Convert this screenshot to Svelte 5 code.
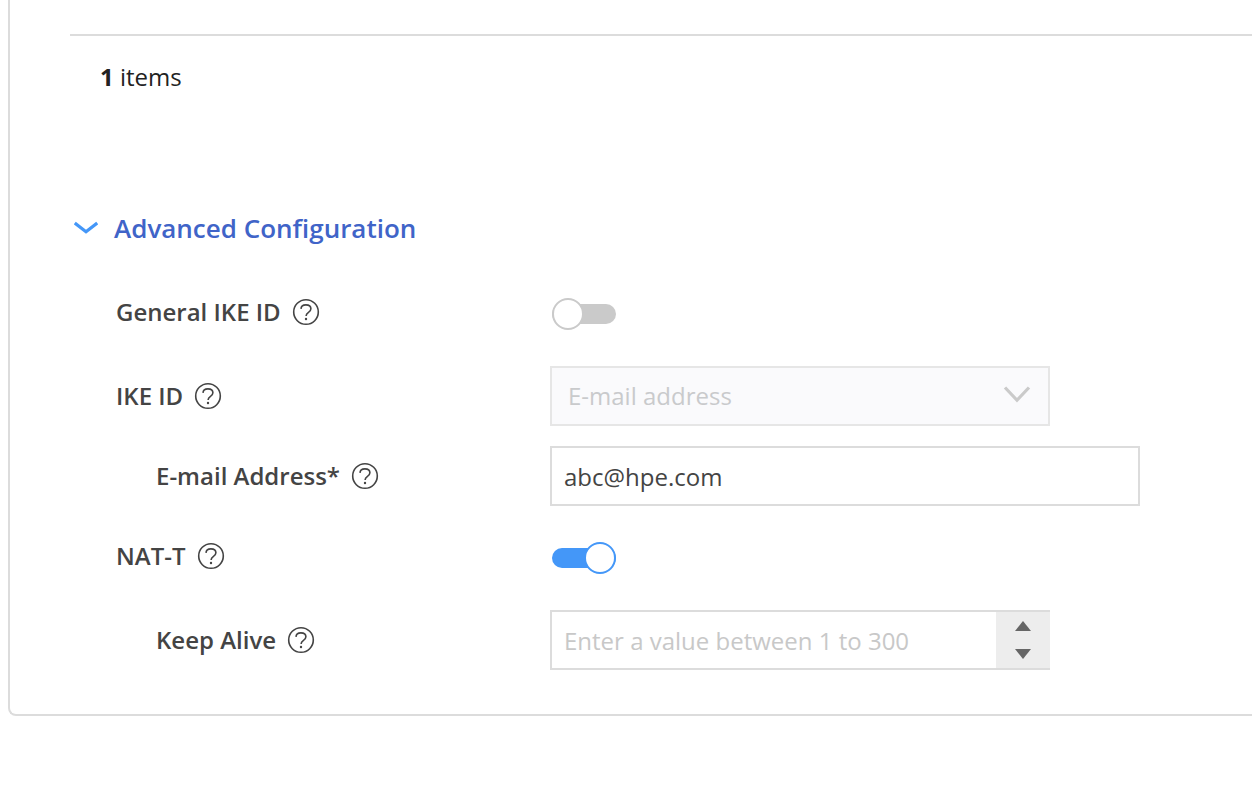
<script>
	let advancedOpen = $state(true);
	let generalIkeId = $state(false);
	let natT = $state(true);
	let ikeIdType = $state('email');
	let email = $state('abc@hpe.com');
	let keepAlive = $state(null);

	const itemCount = 1;
	const MIN = 1;
	const MAX = 300;

	function step(delta) {
		const next = (keepAlive ?? 0) + delta;
		keepAlive = Math.min(MAX, Math.max(MIN, next));
	}
</script>

{#snippet fieldLabel(id, text)}
	<div class="field-label">
		<label for={id}>{text}</label>
		<button type="button" class="help" aria-label="Help for {text}">
			<svg viewBox="0 0 28 28" width="28" height="28" fill="none" stroke="currentColor">
				<circle cx="14" cy="14" r="12.3" stroke-width="1.6" />
				<path d="M9 10.9C9.1 8.4 11.1 6.9 13.9 6.9c2.9 0 5 1.5 5 3.9 0 1.7-.9 2.5-2.4 3.5-1.7 1.1-2.4 1.8-2.4 3.7" stroke-width="1.6" />
				<circle cx="14" cy="21" r="1.2" fill="currentColor" stroke="none" />
			</svg>
		</button>
	</div>
{/snippet}

<section class="panel">
	<div class="table-footer">
		<p class="count"><strong>{itemCount}</strong> items</p>
	</div>

	<button
		type="button"
		class="section-toggle"
		aria-expanded={advancedOpen}
		onclick={() => (advancedOpen = !advancedOpen)}
	>
		<svg class:collapsed={!advancedOpen} viewBox="0 0 24 24" width="24" height="24" fill="none">
			<path d="M.8 7L12 15.7L23.2 7" stroke="#4497f8" stroke-width="3.2" />
		</svg>
		<span>Advanced Configuration</span>
	</button>

	{#if advancedOpen}
		<form class="fields">
			<div class="field toggle">
				{@render fieldLabel('general-ike-id', 'General IKE ID')}
				<input id="general-ike-id" class="switch" type="checkbox" role="switch" bind:checked={generalIkeId} />
			</div>

			<div class="group">
				<div class="field">
					{@render fieldLabel('ike-id', 'IKE ID')}
					<div class="select">
						<select id="ike-id" bind:value={ikeIdType} disabled>
							<option value="email">E-mail address</option>
						</select>
						<svg viewBox="0 0 28 20" width="28" height="20" fill="none">
							<path d="M2 1.5L14 14.2L26 1.5" stroke="#cacaca" stroke-width="3.2" />
						</svg>
					</div>
				</div>

				<div class="field nested">
					{@render fieldLabel('email', 'E-mail Address*')}
					<input id="email" class="text" type="text" bind:value={email} />
				</div>
			</div>

			<div class="field toggle">
				{@render fieldLabel('nat-t', 'NAT-T')}
				<input id="nat-t" class="switch" type="checkbox" role="switch" bind:checked={natT} />
			</div>

			<div class="field nested">
				{@render fieldLabel('keep-alive', 'Keep Alive')}
				<div class="number">
					<input
						id="keep-alive"
						type="number"
						min={MIN}
						max={MAX}
						placeholder="Enter a value between 1 to 300"
						bind:value={keepAlive}
					/>
					<div class="spinner">
						<button type="button" aria-label="Increase" onclick={() => step(1)}>
							<svg viewBox="0 0 16 10" width="16" height="10"><path d="M8 0L16 10H0Z" fill="#666" /></svg>
						</button>
						<button type="button" aria-label="Decrease" onclick={() => step(-1)}>
							<svg viewBox="0 0 16 10" width="16" height="10"><path d="M0 0H16L8 10Z" fill="#666" /></svg>
						</button>
					</div>
				</div>
			</div>
		</form>
	{/if}
</section>

<style>
	:global(body) {
		background: #fff;
		color: #444;
		font-family: 'Open Sans', 'Liberation Sans', sans-serif;
		font-size: 24px;
		line-height: 32px;
	}

	.panel,
	.panel * {
		box-sizing: border-box;
	}

	.panel {
		margin-left: 8px;
		padding: 34px 0 44px 60px;
		border: solid #dcdcdc;
		border-width: 0 0 2px 2px;
		border-bottom-left-radius: 8px;
	}

	button,
	input,
	select {
		margin: 0;
		padding: 0;
		border: 0;
		border-radius: 0;
		background: none;
		color: inherit;
		font: inherit;
	}

	button {
		cursor: pointer;
	}

	svg {
		display: block;
		flex-shrink: 0;
	}

	.table-footer {
		padding: 25px 30px;
		border-top: 2px solid #dcdcdc;
	}

	.count {
		margin: 0;
		color: #222;
	}

	.section-toggle {
		display: flex;
		align-items: center;
		gap: 16px;
		margin-top: 94px;
		padding-left: 4px;
		color: #4064c8;
		font-size: 26px;
		font-weight: 600;
	}

	.collapsed {
		transform: rotate(-90deg);
	}

	.fields {
		display: flex;
		flex-direction: column;
		gap: 22px;
		margin: 40px 0 0 46px;
	}

	.group {
		display: flex;
		flex-direction: column;
		gap: 20px;
	}

	.field {
		display: grid;
		grid-template-columns: 434px minmax(0, 1fr);
		align-items: center;
		min-height: 60px;
	}

	.field-label {
		display: flex;
		align-items: center;
		gap: 11px;
		font-weight: 600;
	}

	.toggle .field-label {
		padding-bottom: 4px;
	}

	.nested .field-label {
		padding-left: 40px;
	}

	/* switch */
	.switch {
		appearance: none;
		display: flex;
		align-items: center;
		position: relative;
		width: 64px;
		height: 32px;
		margin-left: 2px;
		cursor: pointer;
	}

	.switch::before {
		content: '';
		width: 64px;
		height: 20px;
		border-radius: 10px;
		background: #cacaca;
	}

	.switch::after {
		content: '';
		position: absolute;
		left: 0;
		box-sizing: border-box;
		width: 32px;
		height: 32px;
		border: 2px solid #cacaca;
		border-radius: 50%;
		background: #fff;
	}

	.switch:checked::before {
		background: #4497f8;
	}

	.switch:checked::after {
		left: 32px;
		border-color: #4497f8;
	}

	/* inputs */
	.text,
	.number {
		height: 60px;
		border: 2px solid #dcdcdc;
	}

	.text {
		width: 100%;
		max-width: 590px;
		padding: 0 12px;
	}

	.select {
		display: grid;
		align-items: center;
		max-width: 500px;
	}

	.select select,
	.select svg {
		grid-area: 1 / 1;
	}

	.select select {
		appearance: none;
		width: 100%;
		height: 60px;
		padding: 0 48px 0 16px;
		border: 2px solid #e6e6e6;
		background: #fafafc;
		color: #c9cacc;
		opacity: 1;
	}

	.select svg {
		justify-self: end;
		margin-right: 19px;
		pointer-events: none;
	}

	.number {
		display: flex;
		max-width: 500px;
		border-right: 0;
	}

	.number input {
		appearance: textfield;
		flex: 1;
		min-width: 0;
		padding: 2px 12px 0;
	}

	.number input::-webkit-inner-spin-button {
		appearance: none;
	}

	.number input::placeholder {
		color: #c8c8c8;
		opacity: 1;
	}

	.spinner {
		display: flex;
		flex-direction: column;
		width: 54px;
		background: #ededed;
	}

	.spinner button {
		display: flex;
		flex: 1;
		align-items: center;
		justify-content: center;
	}
</style>
